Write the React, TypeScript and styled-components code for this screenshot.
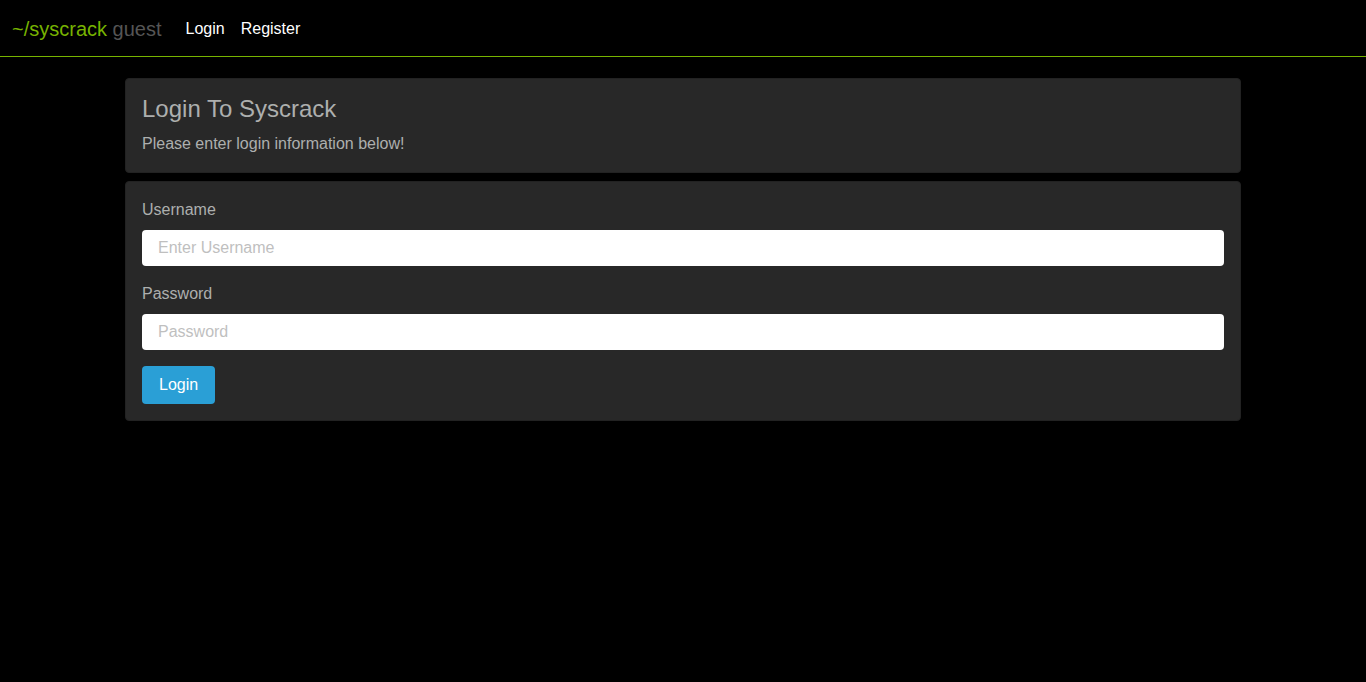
import React from "react";
import styled, { createGlobalStyle } from "styled-components";

const Global = createGlobalStyle`
  html, body { margin: 0; padding: 0; background: #000; }
  body { font-family: "Liberation Sans", Arial, sans-serif; color: #adafae; font-size: 16px; line-height: 1.5; }
  * { box-sizing: border-box; }
`;

const Navbar = styled.nav`
  display: flex;
  align-items: center;
  height: 57px;
  padding: 2px 12px 0;
  border-bottom: 1px solid #77b300;
`;

const Brand = styled.a`
  font-size: 20px;
  color: #77b300;
  text-decoration: none;
  margin-right: 24px;
`;

const Muted = styled.span`
  color: #555;
`;

const NavLinks = styled.div`
  display: flex;
  gap: 16px;
`;

const NavLink = styled.a`
  color: #fff;
  font-size: 16px;
  text-decoration: none;
`;

const Container = styled.main`
  width: 1116px;
  margin: 21px auto 0;
  display: flex;
  flex-direction: column;
  gap: 8px;
`;

const Card = styled.section`
  background: #282828;
  border: 1px solid #222;
  border-radius: 4px;
  padding: 16px;
`;

const Title = styled.h1`
  margin: 0 0 8px;
  font-size: 24px;
  font-weight: 400;
  line-height: 1.2;
  color: #adafae;
`;

const Text = styled.p`
  margin: 0;
`;

const Group = styled.div`
  margin-bottom: 16px;
`;

const Label = styled.label`
  display: block;
  margin-bottom: 8px;
`;

const Input = styled.input`
  display: block;
  width: 100%;
  height: 36px;
  padding: 6px 16px;
  border: none;
  border-radius: 4px;
  background: #fff;
  font: inherit;
  color: #333;
  outline: none;
  &::placeholder { color: #bfbfbf; }
`;

const Button = styled.button`
  display: block;
  height: 38px;
  padding: 0 17px;
  border: none;
  border-radius: 4px;
  background: #2a9fd6;
  color: #fff;
  font: inherit;
  cursor: pointer;
`;

export default function App() {
  return (
    <>
      <Global />
      <Navbar>
        <Brand href="#">~/syscrack <Muted>guest</Muted></Brand>
        <NavLinks>
          <NavLink href="#">Login</NavLink>
          <NavLink href="#">Register</NavLink>
        </NavLinks>
      </Navbar>
      <Container>
        <Card>
          <Title>Login To Syscrack</Title>
          <Text>Please enter login information below!</Text>
        </Card>
        <Card>
          <Group>
            <Label>Username</Label>
            <Input placeholder="Enter Username" />
          </Group>
          <Group>
            <Label>Password</Label>
            <Input type="password" placeholder="Password" />
          </Group>
          <Button>Login</Button>
        </Card>
      </Container>
    </>
  );
}
